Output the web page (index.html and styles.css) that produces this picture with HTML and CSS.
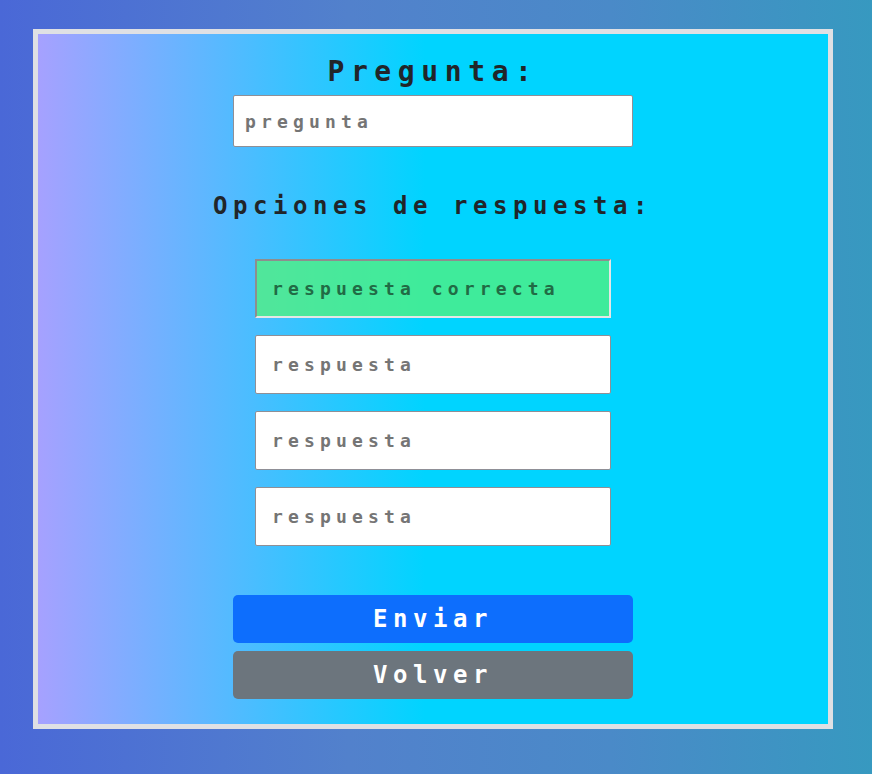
FILE: index.html
```html
<!DOCTYPE html>
<html lang="es">
<head>
<meta charset="utf-8">
<title>Pregunta</title>
<link rel="stylesheet" href="styles.css">
</head>
<body>
<div class="card">
  <h1 class="title">Pregunta:</h1>
  <input class="field question" type="text" placeholder="pregunta">
  <h2 class="subtitle">Opciones de respuesta:</h2>
  <div class="answers">
    <input class="field answer correct" type="text" placeholder="respuesta correcta">
    <input class="field answer" type="text" placeholder="respuesta">
    <input class="field answer" type="text" placeholder="respuesta">
    <input class="field answer" type="text" placeholder="respuesta">
  </div>
  <div class="actions">
    <button class="btn btn-primary" type="button">Enviar</button>
    <button class="btn btn-secondary" type="button">Volver</button>
  </div>
</div>
</body>
</html>
```
FILE: styles.css
```css
html, body {
  margin: 0;
  padding: 0;
}
body {
  height: 774px;
  overflow: hidden;
  background: linear-gradient(90deg, #4a68d7 0%, #5281cc 40%, #4a8ac8 70%, #3799c0 100%);
  font-family: "DejaVu Sans Mono", "Liberation Mono", monospace;
  font-weight: bold;
  color: #212529;
}
.card {
  box-sizing: border-box;
  width: 800px;
  height: 700px;
  margin: 29px 0 0 33px;
  border: 5px solid #dfe0e4;
  background: linear-gradient(90deg, #a6a1ff 0%, #00d4ff 49%, #00d4ff 100%);
  display: flex;
  flex-direction: column;
  align-items: center;
  padding-top: 22px;
}
.title {
  margin: 0;
  font-size: 28px;
  line-height: 32px;
  letter-spacing: 6.6px;
  font-weight: bold;
}
.subtitle {
  margin: 45px 0 0;
  font-size: 24px;
  line-height: 28px;
  letter-spacing: 5.55px;
  font-weight: bold;
}
.field {
  box-sizing: border-box;
  font-family: "DejaVu Sans Mono", "Liberation Mono", monospace;
  font-weight: bold;
  font-size: 18px;
  letter-spacing: 5.15px;
  background: #ffffff;
  border: 1px solid #8f8f96;
  border-radius: 2px;
  outline: none;
  margin: 0;
  color: #212529;
}
.field::placeholder {
  color: #757575;
  opacity: 1;
}
.question {
  margin-top: 7px;
  width: 400px;
  height: 52px;
  padding: 0 0 0 11px;
}
.answers {
  margin-top: 39px;
  display: flex;
  flex-direction: column;
  gap: 17px;
}
.answer {
  width: 356px;
  height: 59px;
  padding: 0 0 0 16px;
}
.answer.correct {
  background: rgba(84, 243, 122, 0.75);
  border-radius: 0;
  border-width: 2px;
  border-style: solid;
  border-color: #8e8e8e #e6e6e6 #e6e6e6 #8e8e8e;
  padding-left: 15px;
}
.answer.correct::placeholder {
  color: #216b45;
}
.actions {
  margin-top: 49px;
  display: flex;
  flex-direction: column;
  gap: 8px;
}
.btn {
  width: 400px;
  height: 48px;
  border: 0;
  border-radius: 5px;
  color: #ffffff;
  font-family: "DejaVu Sans Mono", "Liberation Mono", monospace;
  font-weight: bold;
  font-size: 24px;
  letter-spacing: 5.55px;
  padding: 0;
  cursor: pointer;
}
.btn-primary {
  background: #0d6efd;
}
.btn-secondary {
  background: #6c757d;
}
```
